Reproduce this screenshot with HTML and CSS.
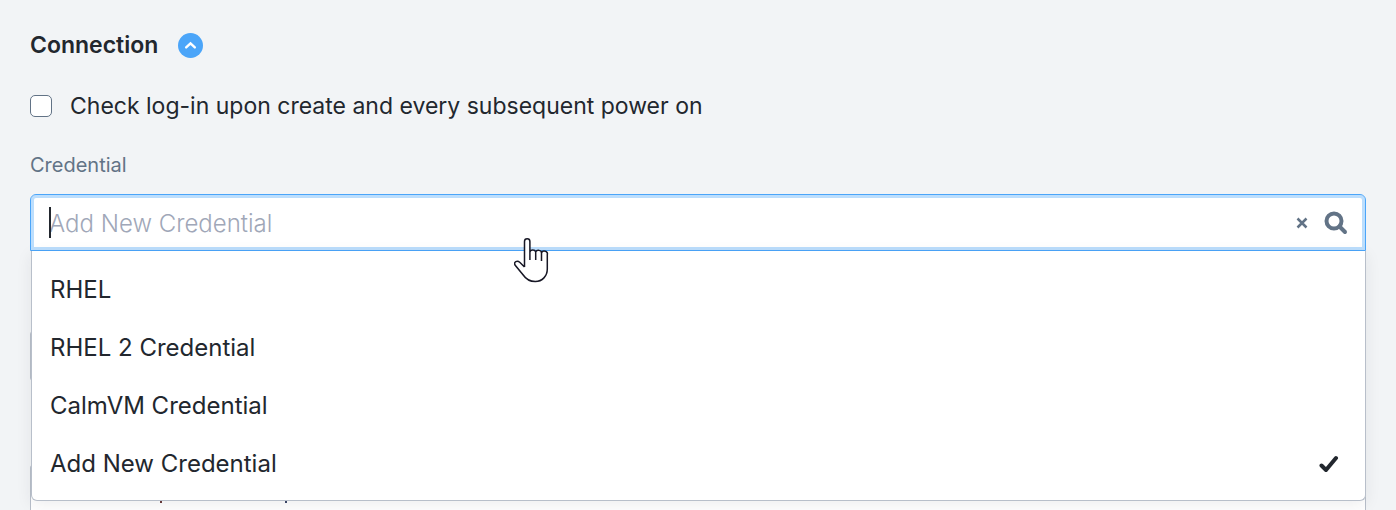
FILE: index.html
```html
<!DOCTYPE html>
<html lang="en">
<head>
<meta charset="utf-8">
<title>Connection</title>
<link rel="stylesheet" href="styles.css">
</head>
<body>
<main class="panel">
  <header class="section-head">
    <h2 class="section-title">Connection</h2>
    <button class="collapse" type="button" aria-label="Collapse section">
      <svg viewBox="0 0 26 26" aria-hidden="true"><path d="M8.500 15 13 10.800l4.500 4.200"/></svg>
    </button>
  </header>
  <label class="check-row">
    <input class="check" type="checkbox">
    <span>Check log-in upon create and every subsequent power on</span>
  </label>
  <label class="field-label" for="credential">Credential</label>
  <div class="combo">
    <div class="combo-box">
      <input class="combo-input" id="credential" type="text" placeholder="Add New Credential" autocomplete="off">
      <span class="caret"></span>
      <button class="icon-button clear" type="button" aria-label="Clear">
        <svg viewBox="0 0 12 12" aria-hidden="true"><path d="M1.500 1.500l9 9M10.500 1.500l-9 9"/></svg>
      </button>
      <button class="icon-button search" type="button" aria-label="Search">
        <svg viewBox="0 0 24 24" aria-hidden="true"><circle cx="10" cy="10" r="7.500"/><path d="M15.500 15.500l5.500 5.500"/></svg>
      </button>
    </div>
    <ul class="options" role="listbox" aria-label="Credential">
      <li class="option" role="option">RHEL</li>
      <li class="option" role="option">RHEL 2 Credential</li>
      <li class="option" role="option">CalmVM Credential</li>
      <li class="option" role="option" aria-selected="true">Add New Credential
        <svg class="tick" viewBox="0 0 20 18" aria-hidden="true"><path d="M2.500 10.500 7 15 17 3"/></svg>
      </li>
    </ul>
    <svg class="pointer" viewBox="0 0 36 48" aria-hidden="true"><path d="M10.500 31V5.500a2.700 2.700 0 0 1 5.400 0V16a3 2.600 0 0 1 5.800 0a3 2.600 0 0 1 5.800 1a3 2.600 0 0 1 5.800 1.500V33c0 7-5 12.500-12 12.500-6 0-9.500-2.500-12.500-7L1 29c-1.500-3 2-5 5-2.500l4.500 4.500M15.900 15v9M21.700 16v8M27.500 17v8"/></svg>
  </div>
  <div class="covered-input"></div>
  <div class="covered-area"></div>
</main>
</body>
</html>
```
FILE: styles.css
```css
* { box-sizing: border-box; }
body {
  margin: 0;
  background: #f2f4f6;
  color: #22272e;
  font: 23px/30px Inter, "Noto Sans", sans-serif;
}
.panel { display: flex; flex-direction: column; min-height: 100vh; padding: 30px 30px 0; }
.section-head { display: flex; align-items: center; gap: 20px; height: 30px; }
.section-title { margin: 0; font-size: 23px; font-weight: 600; }
.collapse { width: 25px; height: 25px; padding: 0; border: 0; border-radius: 50%; background: #4ba5f9; }
.collapse svg { display: block; width: 25px; height: 25px; }
.collapse path { fill: none; stroke: #fff; stroke-width: 2.500; stroke-linecap: round; }
.check-row { display: flex; align-items: center; gap: 18px; margin-top: 31px; }
.check {
  appearance: none; width: 22px; height: 22px; margin: 0;
  border: 1px solid #627386; border-radius: 5px; background: #fff;
}
.field-label { display: block; margin-top: 29px; color: #627386; font-size: 20px; }
.combo { position: relative; margin-top: 14px; }
.combo-box {
  position: relative; display: flex; align-items: center; height: 57px; padding: 0 17px 0 18px;
  border: 1px solid #4ba5f9; border-radius: 6px 6px 0 0; background: #fff;
  box-shadow: inset 0 0 0 3px #bcdefd;
}
.combo-input {
  flex: 1; min-width: 0; padding: 2px 0 0; border: 0; outline: 0; background: none;
  color: inherit; font: inherit; font-size: 24px;
}
.combo-input::placeholder { color: #a0a7b8; font-weight: 300; opacity: 1; }
.caret { position: absolute; left: 18px; top: 12px; width: 2px; height: 31px; background: #22272e; }
.icon-button { padding: 0; border: 0; background: none; color: #627386; }
.icon-button svg { display: block; width: 100%; fill: none; stroke: currentColor; }
.clear { width: 12px; margin-right: 16px; stroke-width: 2.500; }
.search { width: 24px; stroke-width: 4; }
.search path { stroke-linecap: round; }
.options {
  position: absolute; z-index: 1; top: 57px; left: 1px; right: 0;
  margin: 0; padding: 10px 26px 7px 18px; list-style: none; font-size: 24px;
  border: 1px solid #b8bfca; border-top: 0; border-radius: 0 0 6px 6px;
  background: #fff; box-shadow: 0 4px 16px #22272e14;
}
.option { display: flex; align-items: center; justify-content: space-between; height: 58px; }
.tick { width: 20px; height: 18px; fill: none; stroke: #22272e; stroke-width: 4; stroke-linecap: round; stroke-linejoin: round; }
.pointer { position: absolute; z-index: 2; top: 42px; left: calc(36% + 3px); width: 36px; height: 48px; fill: #fff; stroke: #171725; stroke-width: 1.500; }
.covered-input { height: 50px; margin-top: 80px; border: 1px solid #b8bfca; border-radius: 3px; background: #fff; }
.covered-area {
  flex: 1; margin-top: 84px; border: 1px solid #b8bfca; border-bottom: 0; border-radius: 3px 3px 0 0;
  background:
    linear-gradient(#6b3a3a, #6b3a3a) 129px 35px / 2px 2px no-repeat,
    linear-gradient(#3a4668, #3a4668) 254px 35px / 2px 2px no-repeat,
    #fff;
}
```
